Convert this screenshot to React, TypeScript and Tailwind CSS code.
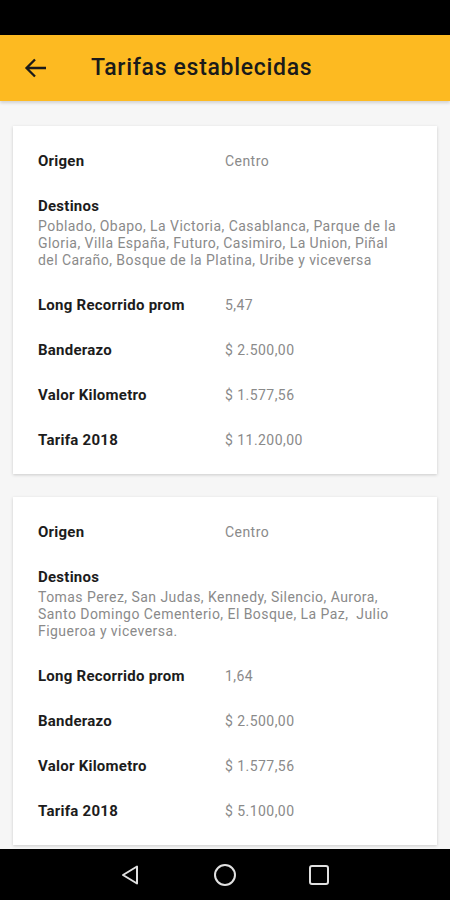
import React from "react";

type Card = {
  origen: string;
  destinos: string;
  rows: [string, string][];
};

const cards: Card[] = [
  {
    origen: "Centro",
    destinos:
      "Poblado, Obapo, La Victoria, Casablanca, Parque de la Gloria, Villa España, Futuro, Casimiro, La Union, Piñal del Caraño, Bosque de la Platina, Uribe y viceversa",
    rows: [
      ["Long Recorrido prom", "5,47"],
      ["Banderazo", "$ 2.500,00"],
      ["Valor Kilometro", "$ 1.577,56"],
      ["Tarifa 2018", "$ 11.200,00"],
    ],
  },
  {
    origen: "Centro",
    destinos:
      "Tomas Perez, San Judas, Kennedy, Silencio, Aurora, Santo Domingo Cementerio, El Bosque, La Paz,\u00a0 Julio Figueroa y viceversa.",
    rows: [
      ["Long Recorrido prom", "1,64"],
      ["Banderazo", "$ 2.500,00"],
      ["Valor Kilometro", "$ 1.577,56"],
      ["Tarifa 2018", "$ 5.100,00"],
    ],
  },
];

function Row({ label, value }: { label: string; value: string }) {
  return (
    <div className="flex h-[20px] items-center">
      <div className="w-[187px] shrink-0 text-[15px] font-bold tracking-[0.25px] text-[#1c1c1c]">{label}</div>
      <div className="text-[14px] tracking-[0.45px] text-[#8a8a8a]">{value}</div>
    </div>
  );
}

function TarifaCard({ card }: { card: Card }) {
  return (
    <div className="mx-[13px] bg-white px-[25px] pt-[25px] pb-[24px] shadow-[0_1px_3px_rgba(0,0,0,0.18)]">
      <Row label="Origen" value={card.origen} />
      <div className="mt-[25px]">
        <div className="flex h-[20px] items-center text-[15px] font-bold tracking-[0.25px] text-[#1c1c1c]">Destinos</div>
        <div className="mt-[2px] text-[14px] leading-[17px] tracking-[0.45px] text-[#8a8a8a]">{card.destinos}</div>
      </div>
      <div className="mt-[26px] flex flex-col gap-[25px]">
        {card.rows.map(([l, v]) => (
          <Row key={l} label={l} value={v} />
        ))}
      </div>
    </div>
  );
}

export default function App() {
  return (
    <div
      className="flex h-[900px] w-[450px] flex-col overflow-hidden bg-[#f6f6f6]"
      style={{ fontFamily: "Roboto, 'Noto Sans', sans-serif" }}
    >
      <div className="h-[35px] shrink-0 bg-black" />
      <div className="relative z-10 flex h-[66px] shrink-0 items-center bg-[#fdba21] shadow-[0_2px_3px_rgba(0,0,0,0.15)]">
        <svg width="24" height="24" viewBox="0 0 24 24" className="ml-[24px]">
          <path d="M22 12H3M11 3.5L2.5 12 11 20.5" fill="none" stroke="#1a1a1a" strokeWidth="2.3" />
        </svg>
        <div className="ml-[43px] text-[23px] font-medium tracking-[0.7px] text-[#1a1a1a]">Tarifas establecidas</div>
      </div>
      <div className="flex min-h-0 flex-1 flex-col gap-[23px] overflow-hidden pt-[25px]">
        {cards.map((c, i) => (
          <TarifaCard key={i} card={c} />
        ))}
      </div>
      <div className="flex h-[51px] shrink-0 items-center justify-center gap-[70px] bg-black">
        <svg width="24" height="24" viewBox="0 0 24 24">
          <path d="M18 3.5V20.5L4 12Z" fill="none" stroke="#e0e0e0" strokeWidth="2" strokeLinejoin="round" />
        </svg>
        <svg width="24" height="24" viewBox="0 0 24 24">
          <circle cx="12" cy="12" r="10" fill="none" stroke="#e0e0e0" strokeWidth="2" />
        </svg>
        <svg width="24" height="24" viewBox="0 0 24 24">
          <rect x="3" y="3" width="18" height="18" rx="2" fill="none" stroke="#e0e0e0" strokeWidth="2" />
        </svg>
      </div>
    </div>
  );
}
